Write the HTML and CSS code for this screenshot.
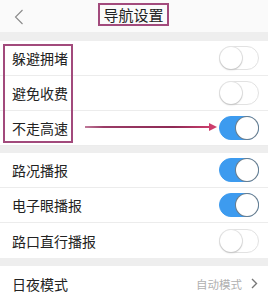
FILE: index.html
```html
<!DOCTYPE html>
<html>
<head>
<meta charset="utf-8">
<link rel="stylesheet" href="styles.css">
</head>
<body>
<div class="page">
  <header class="topbar">
    <span class="back">
      <svg width="10" height="16" viewBox="0 0 10 16"><path d="M8.5 1 L1.5 8 L8.5 15" fill="none" stroke="#8a8a8a" stroke-width="1.1"/></svg>
    </span>
    <span class="title">导航设置</span>
  </header>
  <div class="gap"></div>
  <section class="group group-first">
    <div class="row"><span class="label">躲避拥堵</span><span class="switch"></span></div>
    <div class="row"><span class="label">避免收费</span><span class="switch"></span></div>
    <div class="row"><span class="label">不走高速</span><span class="switch on"></span></div>
    <div class="mark-box"></div>
    <svg class="mark-arrow" width="136" height="10" viewBox="0 0 136 10">
      <defs>
        <linearGradient id="ag" x1="0" x2="1" y1="0" y2="0">
          <stop offset="0" stop-color="#c07a9a"/>
          <stop offset="0.15" stop-color="#9a3c66"/>
          <stop offset="0.7" stop-color="#8e2a55"/>
          <stop offset="1" stop-color="#cc3d6c"/>
        </linearGradient>
      </defs>
      <rect x="0" y="4" width="126" height="2" fill="url(#ag)"/>
      <path d="M124 1 L132 5 L124 9 Z" fill="#cc3d6c"/>
    </svg>
  </section>
  <div class="gap gap-mid"></div>
  <section class="group">
    <div class="row"><span class="label">路况播报</span><span class="switch on"></span></div>
    <div class="row"><span class="label">电子眼播报</span><span class="switch on"></span></div>
    <div class="row"><span class="label">路口直行播报</span><span class="switch"></span></div>
  </section>
  <div class="gap gap-mid"></div>
  <section class="group">
    <div class="row row-last">
      <span class="label">日夜模式</span>
      <span class="value">自动模式
        <svg width="7" height="11" viewBox="0 0 7 11"><path d="M1 1 L5.5 5.5 L1 10" fill="none" stroke="#777" stroke-width="1.4"/></svg>
      </span>
    </div>
  </section>
</div>
</body>
</html>
```

FILE: styles.css
```css
* { box-sizing: border-box; }
html, body {
  margin: 0;
  padding: 0;
  background: #f0f0f0;
  font-family: "Noto Sans CJK SC", "Noto Sans", sans-serif;
}
.page {
  width: 268px;
  height: 302px;
  overflow: hidden;
  display: flex;
  flex-direction: column;
}
.topbar {
  height: 33px;
  background: #fafafa;
  display: flex;
  align-items: center;
  justify-content: center;
  position: relative;
}
.back {
  position: absolute;
  left: 14px;
  top: 9px;
  display: flex;
}
.title {
  display: flex;
  align-items: center;
  justify-content: center;
  width: 71px;
  height: 23px;
  margin-top: -3px;
  margin-left: -1px;
  border: 2px solid #a24a7c;
  font-size: 15px;
  color: #222;
  line-height: 1;
}
.gap {
  height: 9px;
  background: #eeeeee;
}
.gap-mid {
  height: 8px;
}
.group {
  background: #fff;
  display: flex;
  flex-direction: column;
  position: relative;
}
.row {
  height: 35px;
  display: flex;
  align-items: center;
  justify-content: space-between;
  padding: 0 9px 0 12px;
  border-bottom: 1px solid #ececec;
}
.row:last-of-type { border-bottom: none; }
.group-first .row { height: 35px; }
.row-last { height: 36px; }
.label {
  font-size: 14px;
  color: #222;
  line-height: 1;
}
.switch {
  width: 40px;
  height: 24px;
  border-radius: 12px;
  border: 1px solid #e2e2e2;
  background: #fff;
  position: relative;
}
.switch::after {
  content: "";
  position: absolute;
  left: 0;
  top: 0;
  width: 22px;
  height: 22px;
  border-radius: 50%;
  background: #fff;
  box-shadow: 0 1px 2px rgba(0,0,0,0.18), 0 0 0 1px #e6e6e6;
}
.switch.on {
  background: #3d9bef;
  border-color: #3d9bef;
}
.switch.on::after {
  left: 16px;
  box-shadow: 0 0 0 1px #6a7d8c;
}
.value {
  display: flex;
  align-items: center;
  gap: 9px;
  font-size: 11.5px;
  color: #b0b0b0;
  padding-right: 1px;
}
.mark-box {
  position: absolute;
  left: 3px;
  top: 3px;
  width: 70px;
  height: 99px;
  border: 2px solid #a24a7c;
}
.mark-arrow {
  position: absolute;
  left: 85px;
  top: 81px;
}
```
